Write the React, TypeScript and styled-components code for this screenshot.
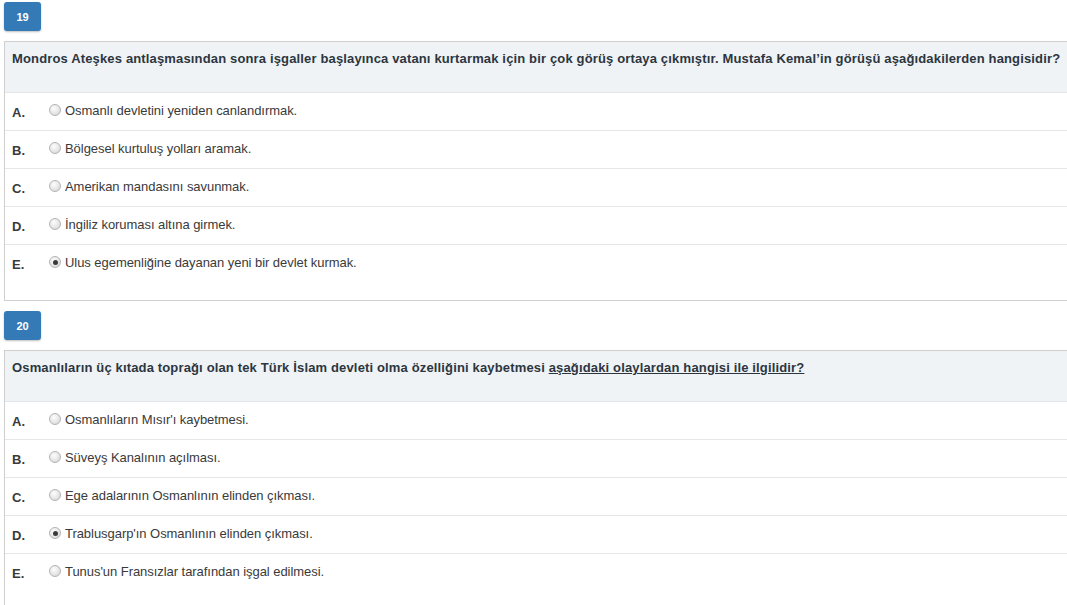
import React from "react";
import styled, { createGlobalStyle } from "styled-components";

const Global = createGlobalStyle`
  html, body { margin: 0; padding: 0; background: #fff; overflow: hidden; }
  body { font-family: "Liberation Sans", Arial, sans-serif; color: #333; }
`;

const Page = styled.div`
  width: 1080px;
  padding: 2px 0 0 4px;
  display: flex;
  flex-direction: column;
`;

const Block = styled.section`
  display: flex;
  flex-direction: column;
  align-items: flex-start;
  margin-bottom: 10px;
`;

const Badge = styled.div`
  width: 37px;
  height: 29px;
  background: #337ab7;
  color: #fff;
  font-weight: bold;
  font-size: 11px;
  display: flex;
  align-items: center;
  justify-content: center;
  border-radius: 3px;
  box-shadow: 0 1px 2px rgba(0, 0, 0, 0.25);
  margin-bottom: 10px;
`;

const Card = styled.div`
  align-self: stretch;
  border: 1px solid #cfcfcf;
  background: #fff;
`;

const Header = styled.div`
  background: #f0f3f6;
  height: 51px;
  border-bottom: 1px solid #e3e6e8;
  padding: 9px 8px 0 7px;
  box-sizing: border-box;
  font-weight: bold;
  font-size: 13px;
  letter-spacing: 0.15px;
  color: #2c3640;
  white-space: nowrap;
`;

const U = styled.span`
  text-decoration: underline;
`;

const Row = styled.label<{ $last?: boolean }>`
  display: flex;
  align-items: flex-start;
  height: ${(p) => (p.$last ? "55px" : "38px")};
  padding-top: 10px;
  box-sizing: border-box;
  border-bottom: ${(p) => (p.$last ? "none" : "1px solid #e6e6e6")};
  font-size: 13px;
`;

const Letter = styled.span`
  width: 37px;
  padding-left: 7px;
  font-weight: bold;
  color: #3a3a3a;
  font-size: 13px;
  margin-top: 2px;
`;

const Radio = styled.span<{ $checked?: boolean }>`
  width: 10px;
  height: 10px;
  border-radius: 50%;
  border: 1px solid #b4b4b4;
  background: radial-gradient(circle at 40% 35%, #fdfdfd 0%, #e4e4e4 60%, #cfcfcf 100%);
  position: relative;
  margin-top: 1px;
  margin-right: 4px;
  flex: none;
  &::after {
    content: "";
    display: ${(p) => (p.$checked ? "block" : "none")};
    position: absolute;
    left: 2.5px;
    top: 2.5px;
    width: 5px;
    height: 5px;
    border-radius: 50%;
    background: #3a3a3a;
  }
`;

const OptText = styled.span`
  color: #3a3a3a;
  letter-spacing: -0.05px;
`;

type Q = {
  no: number;
  header: React.ReactNode;
  options: string[];
  checked: number;
};

const questions: Q[] = [
  {
    no: 19,
    header:
      "Mondros Ateşkes antlaşmasından sonra işgaller başlayınca vatanı kurtarmak için bir çok görüş ortaya çıkmıştır. Mustafa Kemal’in görüşü aşağıdakilerden hangisidir?",
    options: [
      "Osmanlı devletini yeniden canlandırmak.",
      "Bölgesel kurtuluş yolları aramak.",
      "Amerikan mandasını savunmak.",
      "İngiliz koruması altına girmek.",
      "Ulus egemenliğine dayanan yeni bir devlet kurmak.",
    ],
    checked: 4,
  },
  {
    no: 20,
    header: (
      <>
        Osmanlıların üç kıtada toprağı olan tek Türk İslam devleti olma özelliğini kaybetmesi{" "}
        <U>aşağıdaki olaylardan hangisi ile ilgilidir?</U>
      </>
    ),
    options: [
      "Osmanlıların Mısır'ı kaybetmesi.",
      "Süveyş Kanalının açılması.",
      "Ege adalarının Osmanlının elinden çıkması.",
      "Trablusgarp'ın Osmanlının elinden çıkması.",
      "Tunus'un Fransızlar tarafından işgal edilmesi.",
    ],
    checked: 3,
  },
];

const letters = ["A.", "B.", "C.", "D.", "E."];

export default function App() {
  return (
    <>
      <Global />
      <Page>
        {questions.map((q) => (
          <Block key={q.no}>
            <Badge>{q.no}</Badge>
            <Card>
              <Header>{q.header}</Header>
              {q.options.map((o, i) => (
                <Row key={i} $last={i === q.options.length - 1}>
                  <Letter>{letters[i]}</Letter>
                  <Radio $checked={i === q.checked} />
                  <OptText>{o}</OptText>
                </Row>
              ))}
            </Card>
          </Block>
        ))}
      </Page>
    </>
  );
}
